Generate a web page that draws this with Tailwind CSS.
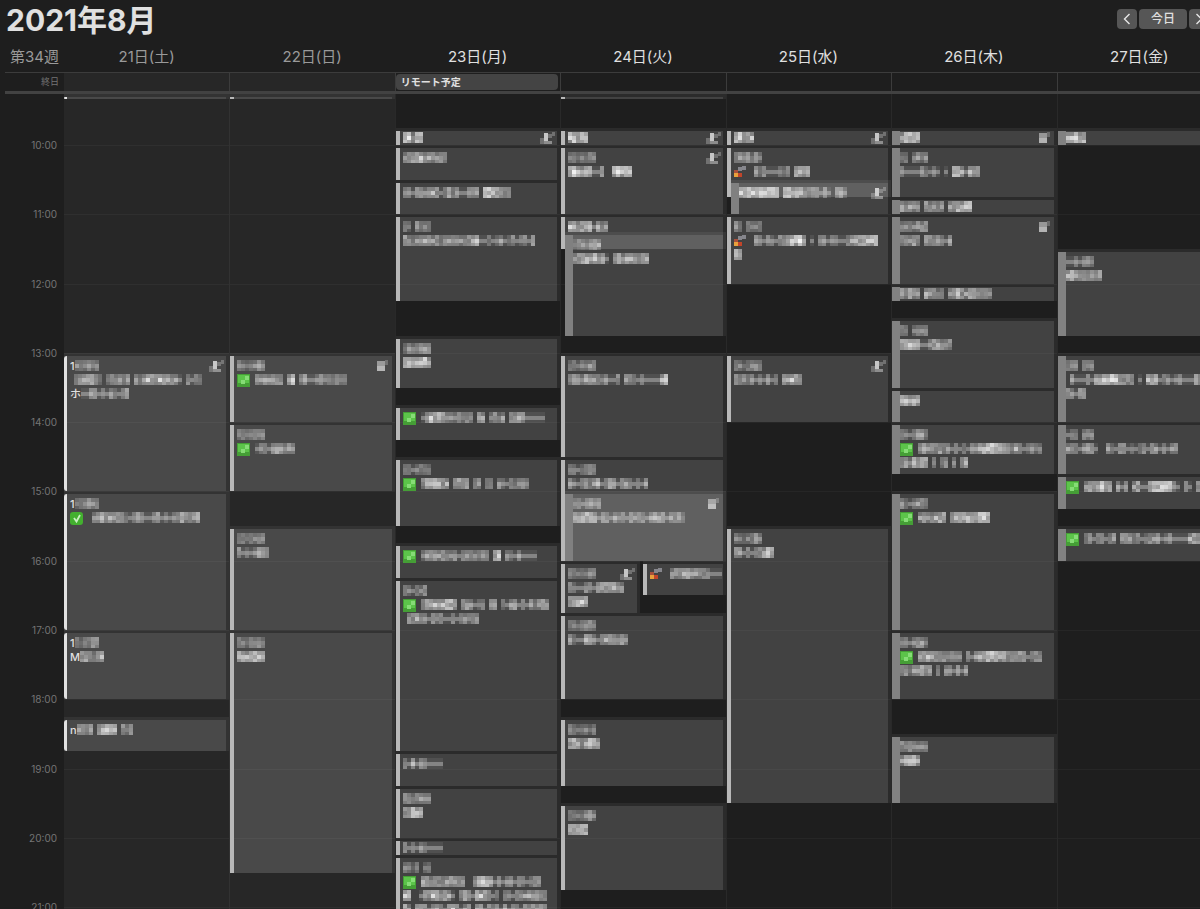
<!DOCTYPE html>
<html lang="ja" class="h-full">

<head>
  <meta charset="UTF-8" />
  <meta name="viewport" content="width=device-width, initial-scale=1.0" />
  <script src="https://cdn.jsdelivr.net/npm/@tailwindcss/browser@4"></script>
  <title>2021年8月</title>
</head>

<body class="h-screen flex flex-col overflow-hidden bg-[#1e1e1e] text-[#e0e0e0] font-['Inter','Noto_Sans_CJK_JP',sans-serif]">

  <!-- Title + navigation -->
  <header class="flex items-center justify-between h-10 pl-[6px] shrink-0">
    <h1 class="text-[30px] leading-10 font-bold">2021年8月</h1>
    <div class="flex gap-[2px] -mr-[9px] mt-[-2px]">
      <button class="w-5 h-5 rounded bg-[#565656] flex items-center justify-center" aria-label="前の週">
        <svg class="w-2 h-3" viewBox="0 0 8 12" fill="none" stroke="#e6e6e6" stroke-width="1.4"><path d="M6.5 1 1.5 6l5 5" /></svg>
      </button>
      <button class="w-12 h-5 rounded bg-[#565656] text-[12px] leading-5 font-medium">今日</button>
      <button class="w-5 h-5 rounded bg-[#565656] flex items-center justify-center" aria-label="次の週">
        <svg class="w-2 h-3" viewBox="0 0 8 12" fill="none" stroke="#e6e6e6" stroke-width="1.4"><path d="m1.5 1 5 5-5 5" /></svg>
      </button>
    </div>
  </header>

  <!-- the last day runs a little past the window -->
  <div class="w-[calc(100%+22px)] flex-1 min-h-0 flex flex-col">

    <!-- Day names -->
    <div class="grid grid-cols-[64px_repeat(7,minmax(0,1fr))] h-8 leading-[34px] text-[15px] text-center shrink-0">
      <div class="text-right pr-[5px] text-[#9a9a9a]">第34週</div>
      <div class="text-[#9a9a9a]">21日(土)</div>
      <div class="text-[#9a9a9a]">22日(日)</div>
      <div>23日(月)</div>
      <div>24日(火)</div>
      <div>25日(水)</div>
      <div>26日(木)</div>
      <div>27日(金)</div>
    </div>

    <!-- All-day row -->
    <div class="ml-[5px] grid grid-cols-[59px_repeat(7,minmax(0,1fr))] h-[22px] border-t border-t-[#3c3c3c] border-b-3 border-b-[#424242] shrink-0">
      <div class="text-right pr-[5px] text-[9px] leading-[18px] text-[#757575]">終日</div>
      <div class="bg-[#272727]"></div>
      <div class="bg-[#272727] border-l border-[#3c3c3c]"></div>
      <div class="border-l border-[#3c3c3c] py-px pr-[2px]">
        <div class="h-4 rounded bg-[#444] pl-[5px] text-[10px] leading-4 font-bold">リモート予定</div>
      </div>
      <div class="border-l border-[#3c3c3c]"></div>
      <div class="border-l border-[#3c3c3c]"></div>
      <div class="border-l border-[#3c3c3c]"></div>
      <div class="border-l border-[#3c3c3c]"></div>
    </div>

    <!-- Time grid -->
    <main class="flex-1 min-h-0 overflow-hidden grid grid-cols-[64px_repeat(7,minmax(0,1fr))]" id="week">
      <div class="grid auto-rows-[1px] text-right pr-[7px] text-[10px] leading-[14px] text-[#757575]" id="hours"></div>
    </main>
  </div>

  <script>
    const HOUR = 69.3;
    const FIRST = 9.25;

    // start, end, lines, options
    // a digit is one cell of masked text (its brightness), "-" is a thin cell
    const T = '4434454';
    const week = [
      [
        ['9:15', '9:20', []],
        ['13:00', '15:00', ['1|444544', ' 4565643 454645 54576576655- 5-44', 'ホ|--55-4-54-56'], { guest: 1 }],
        ['15:00', '17:00', ['1|344544', 'check|466565554-465--56-4-4565556']],
        ['17:00', '18:00', ['1|434455', 'M|565466']],
        ['18:15', '18:45', ['n|5555 67876 545']],
      ],
      [
        ['9:15', '9:20', []],
        ['13:00', '14:00', [T, 'ok|5555555 67 46--45454545'], { guest: 2 }],
        ['14:00', '15:00', [T, 'ok|-44-565454']],
        ['15:30', '17:00', [T, '5-4-4655']],
        ['17:00', '20:30', [T, '6767776']],
      ],
      [
        ['9:45', '10:00', ['78577'], { guest: 1 }],
        ['10:00', '10:30', ['56667565565']],
        ['10:30', '11:00', ['54-564565-4645--556 8877555']],
        ['11:00', '12:15', ['43 5444', '6545565554665554577--4-45-45-45-6']],
        ['12:45', '13:30', ['4544565', '7766785']],
        ['13:45', '14:15', ['ok|-577765545454 56 4545 5665-----']],
        ['14:30', '15:30', ['44-4454', 'ok|5677656 5666 55 45 54-54564']],
        ['15:45', '16:15', ['ok|455555455-5554566 67 54-5----']],
        ['16:15', '18:45', ['44-445', 'ok|565777775 565-45 55 4-56-5-54565', ' 55655-545--5-45455']],
        ['18:45', '19:15', ['5-6-54----']],
        ['19:15', '20:00', ['5545554', '55776']],
        ['20:00', '20:15', ['5-4-54----']],
        ['20:15', '21:30', ['4434 34', 'ok|65555566555  56776-5-55-54-455', '77  -5577666- 565-6775-4 44-55565665', '65 556-565-675-55 67-545-6-55-656565']],
      ],
      [
        ['9:15', '9:20', []],
        ['9:45', '10:00', ['78577'], { guest: 1 }],
        ['10:00', '11:00', [T, '787667--6  78777'], { guest: 1 }],
        ['11:00', '11:30', ['786667-755']],
        ['11:15', '12:45', ['3443455', '56776767- 575665456'], { nested: 1 }],
        ['13:00', '14:30', [T, '4554655545--5 554-5----67']],
        ['14:30', '16:00', ['44-4454', '54-56456-565-555-5-5']],
        ['15:00', '16:00', ['44-4545', '566776-55-545-5455-5655-5454'], { nested: 1, guest: 2 }],
        ['16:00', '16:45', [T, '54--55-5666655', '67776'], { half: 'left', guest: 1 }],
        ['16:00', '16:30', ['fire|5556665555---'], { half: 'right' }],
        ['16:45', '18:00', [T, '54--655-4676565']],
        ['18:15', '19:15', ['4434434', '67656775']],
        ['19:30', '20:45', ['4434454', '66787']],
      ],
      [
        ['9:45', '10:00', ['78577'], { guest: 1 }],
        ['10:00', '10:45', ['4545454', 'fire|545---545 6778'], {}],
        ['10:30', '11:00', ['7777777777 786765455-5- 554'], { nested: 1, guest: 1 }],
        ['11:00', '12:00', ['54 4444', 'fire|54-54-5577786 - 45-54--56667778', '77']],
        ['13:00', '14:00', [T, '54545-4-5-4 56765'], { guest: 1 }],
        ['15:30', '19:30', [T, '55-5-45676']],
      ],
      [
        ['9:45', '10:00', ['67877'], { guest: 2 }],
        ['10:00', '10:45', ['44 4545', '4----54-5- - 776-656']],
        ['10:45', '11:00', ['65656 65545 567788']],
        ['11:00', '12:00', ['4444555', '56565 66555-5'], { guest: 2 }],
        ['12:00', '12:15', ['65656 65545 56855676565']],
        ['12:30', '13:30', ['44 4545', '66776--566555']],
        ['13:30', '14:00', ['67677']],
        ['14:00', '14:45', ['54-4554', 'ok|56555645-5-4-5567788756565-4544', '5646566 5 45 5 56']],
        ['15:00', '17:00', ['54-4554', 'ok|5655676 6666777888']],
        ['17:00', '18:00', ['44-4554', 'ok|56765564555 5-5677886656565-455', '56455765 5 55-6-5']],
        ['18:30', '19:30', ['5554555', '56786']],
      ],
      [
        ['9:45', '10:00', ['67867']],
        ['11:30', '12:45', ['--5-454', '676665666']],
        ['13:00', '14:00', ['445 454', ' 5---5-6677876555 - 776-45-45---65', '55-65']],
        ['14:00', '14:45', ['-44 545', '554-565-  54-55-4-45-55-5-55']],
        ['14:45', '15:15', ['ok|5767757 5-5 56--6788885- 5- 55']],
        ['15:30', '16:00', ['ok|45-55-45 56545-4556-45----6666']],
      ],
    ];

    // background, then the colour bar's look, for each day
    const dayClass = [
      'bg-[#272727]', 'bg-[#272727] border-l border-white/5', '', '', '', '', '',
    ];
    const barClass = [
      'w-[3px] mr-[3px] rounded-l bg-[#e2e2e2]', 'w-1 mr-[3px] bg-[#b8b8b8]', 'w-1 mr-[3px] bg-[#b8b8b8]', 'w-1 mr-[3px] bg-[#b8b8b8]',
      'w-1 mr-[3px] bg-[#b8b8b8]', 'w-2 bg-[#828282]', 'w-2 bg-[#828282]',
    ];

    const icons = {
      ok: '<svg class="w-[14px] h-[14px] mr-1 shrink-0" viewBox="0 0 14 14"><rect width="13" height="13" y="1" fill="#459e36"/><path fill="#5cc44a" d="M1 2h11v8H1z"/><path fill="#86dc76" d="M8 3h4v4H8zM4 7h4v4H4z"/></svg>',
      check: '<svg class="w-[14px] h-[14px] mr-2 shrink-0" viewBox="0 0 14 14"><rect width="13" height="13" y="1" rx="3" fill="#43b02f"/><path d="m4 7 2.500 3.500L10 4" fill="none" stroke="#c9f0c0" stroke-width="1.800"/></svg>',
      fire: '<svg class="w-4 h-[14px] mr-1 shrink-0" viewBox="0 0 16 14"><path fill="#c9c9d6" fill-opacity=".5" d="M4 2h4v4H4zM8 1h4v4H8z"/><path fill="#a8503c" d="M0 5h4v4H0z"/><path fill="#e8a13c" d="M0 8h4v4H0z"/><path fill="#c2452a" d="M4 8h4v4H4z"/></svg>',
    };

    const guests = {
      1: '<svg class="w-4 h-3 ml-auto mr-px mt-px shrink-0" viewBox="0 0 16 12" fill="#fff"><path fill-opacity=".7" d="M4 1h4v8H4z"/><path fill-opacity=".25" d="M0 6h4v6H0zM8 2h4v4H8zM12 0h3v4h-3z"/><path fill-opacity=".4" d="M4 9h8v3H4z"/></svg>',
      2: '<svg class="w-4 h-3 ml-auto mr-px mt-px shrink-0" viewBox="0 0 16 12" fill="#fff"><path fill-opacity=".45" d="M2 1h8v5H2z"/><path fill-opacity=".6" d="M2 6h8v5H2z"/><path fill-opacity=".22" d="M10 0h3v5h-3z"/></svg>',
    };

    function row(time) {
      const [h, m] = time.split(':').map(Number);
      return Math.max(1, Math.round((h + m / 60 - FIRST) * HOUR));
    }

    let seed = 7;
    function noise() {
      seed = (seed * 1103 + 12345) % 65521;
      return seed / 65521;
    }

    function masked(cells) {
      let out = '';
      [...cells].forEach((c, i) => {
        if (c === ' ') return;
        for (let y = 0; y < 3; y++) {
          let a;
          if (c === '-') a = y === 1 ? 0.35 : 0.08;
          else a = (Number(c) / 10 - (y === 1 ? 0 : 0.12)) * (0.6 + noise() * 0.6);
          out += `<rect x="${i * 4}" y="${y * 4}" width="4" height="${y === 2 ? 3 : 4}" fill-opacity="${a.toFixed(2)}"/>`;
        }
      });
      const w = cells.length * 4;
      return `<svg class="shrink-0 h-3" width="${w}" height="12" viewBox="0 0 ${w} 12" fill="#fff" shape-rendering="crispEdges">${out}</svg>`;
    }

    function line(text) {
      const [lead, rest] = text.includes('|') ? text.split('|') : ['', text];
      const head = icons[lead] || (lead ? `<span class="text-[11px] leading-[14px] font-medium">${lead}</span>` : '');
      return `<div class="flex items-center h-[14px]">${head}${masked(rest)}</div>`;
    }

    function event(day, [start, end, lines, opt = {}]) {
      const from = row(start), to = row(end);
      const el = document.createElement('div');
      el.className = 'flex min-w-0 overflow-hidden bg-white/16 bg-clip-padding border-t-3 border-r-3 border-white/6 ';
      el.className += opt.half === 'left' ? 'col-start-1 mr-[3px]' : opt.half === 'right' ? 'col-start-2' : 'col-span-full col-start-1';
      if (opt.nested) el.className += ' ml-1';
      el.style.gridRow = `${from} / ${to}`;
      const bar = opt.nested ? 'w-2 bg-[#808080]' : barClass[day];
      const pad = to - from < 20 ? '' : 'pt-[3px]';
      el.innerHTML = `<i class="shrink-0 ${bar}"></i><div class="min-w-0 ${pad}">${lines.map(line).join('')}</div>`
        + (opt.guest ? `<div class="ml-auto ${pad}">${guests[opt.guest]}</div>` : '');
      return el;
    }

    const weekEl = document.getElementById('week');
    week.forEach((events, day) => {
      const col = document.createElement('div');
      col.className = 'grid grid-cols-2 auto-rows-[1px] min-w-0 ' + (dayClass[day] || 'border-l border-white/5');
      for (let h = 10; h <= 21; h++) {
        const rule = document.createElement('div');
        rule.className = 'col-span-full col-start-1 bg-white/4';
        rule.style.gridRow = row(h + ':00');
        col.append(rule);
      }
      events.forEach(e => col.append(event(day, e)));
      weekEl.append(col);
    });

    const hours = document.getElementById('hours');
    for (let h = 10; h <= 21; h++) {
      const label = document.createElement('div');
      label.textContent = h + ':00';
      label.style.gridRow = `${row(h + ':00') - 7} / span 14`;
      hours.append(label);
    }
  </script>

</body>

</html>
